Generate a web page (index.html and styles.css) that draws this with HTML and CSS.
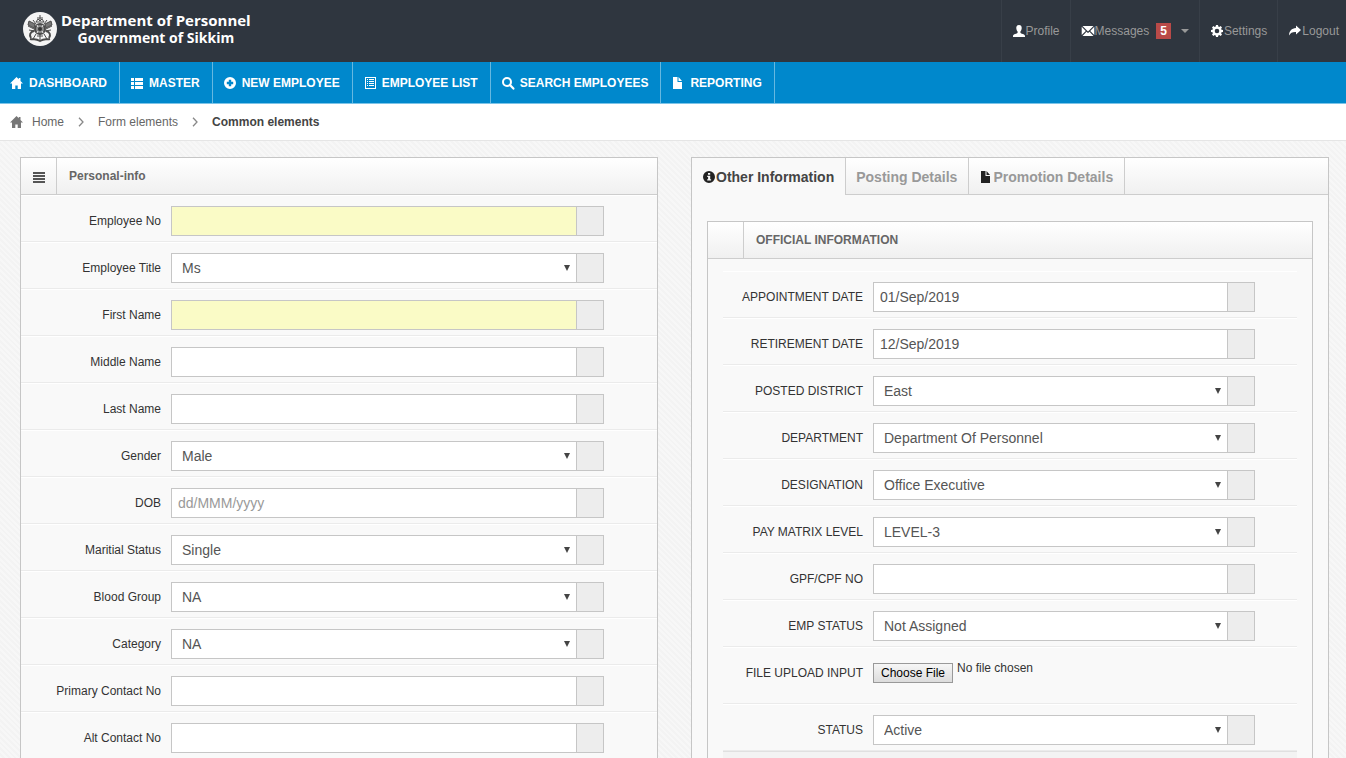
FILE: index.html
```html
<!DOCTYPE html>
<html lang="en">
  <head>
    <meta charset="UTF-8" />
    <meta name="viewport" content="width=device-width, initial-scale=1.0" />
    <title>Department of Personnel - Government of Sikkim</title>
    <link rel="stylesheet" href="styles.css">
  </head>
  <body>
    <!-- Shared icon shapes -->
    <svg class="sprite" aria-hidden="true">
      <symbol id="i-home" viewBox="0 0 14 14"><path d="M6.500 1 0 7.600h2V13h3.300V9.400h2.400V13H11V7.600h2L10.500 5V2H8.800v1.300z" /></symbol>
      <symbol id="i-th-list" viewBox="0 0 14 14"><path d="M1 2h3v3H1zM5 2h8v3H5zM1 6h3v3H1zM5 6h8v3H5zM1 10h3v3H1zM5 10h8v3H5z" /></symbol>
      <symbol id="i-plus" viewBox="0 0 14 14"><path fill-rule="evenodd" d="M7 1a6 6 0 1 0 0 12A6 6 0 0 0 7 1zM5.8 3.8h2.4v2h2v2.4h-2v2H5.8v-2h-2V5.8h2z" /></symbol>
      <symbol id="i-list" viewBox="0 0 14 14"><path fill-rule="evenodd" d="M2 1h11v12H2zM3 2v10h9V2zM4 3h1v1H4zM6 3h5v1H6zM4 5h1v1H4zM6 5h5v1H6zM4 7h1v1H4zM6 7h5v1H6zM4 9h1v1H4zM6 9h5v1H6z" /></symbol>
      <symbol id="i-search" viewBox="0 0 14 14"><path d="M9 9l3.400 3.600" stroke="currentColor" stroke-width="2.200" stroke-linecap="round" /><circle cx="6" cy="6" r="4" fill="none" stroke="currentColor" stroke-width="2" /></symbol>
      <symbol id="i-file" viewBox="0 0 14 14"><path d="M2 1h4.500v5H11v7H2zM7.500 1 11 5H7.500z" /></symbol>
      <symbol id="i-user" viewBox="0 0 14 14"><path d="M7 1C5 1 4.200 2.400 4.300 4.300c.1 1.700.7 2.500 1.300 3.200v1.300C5.300 9.900 1 10 1 12v1h12v-1c0-2-4.300-2.100-4.600-3.200V7.500c.6-.7 1.200-1.500 1.300-3.200C9.800 2.400 9 1 7 1z" /></symbol>
      <symbol id="i-mail" viewBox="0 0 14 14"><path d="M1.500 2h11L7 7.500zM.7 2.700 4.800 7 .7 11zM13.300 2.700 9.200 7l4.100 4zM1.500 12l4-4.200L7 9l1.500-1.200 4 4.200z" /></symbol>
      <symbol id="i-cog" viewBox="0 0 14 14"><path fill-rule="evenodd" d="M6 1h2l.3 1.500 1 .4 1.300-.9 1.400 1.400-.9 1.300.4 1L13 6v2l-1.500.3-.4 1 .9 1.300-1.400 1.400-1.300-.9-1 .4L8 13H6l-.3-1.500-1-.4-1.300.9L2 10.600l.9-1.300-.4-1L1 8V6l1.500-.3.4-1L2 3.400 3.400 2l1.300.9 1-.4zM7 4.700a2.300 2.300 0 1 0 0 4.600 2.300 2.300 0 0 0 0-4.600z" /></symbol>
      <symbol id="i-share" viewBox="0 0 14 14"><path d="M8 1.500 13 6 8 10.500V8C4.500 7.800 2.500 8.800 1 11.500 1.200 7 3.500 4.300 8 4z" /></symbol>
      <symbol id="i-info" viewBox="0 0 14 14"><path fill-rule="evenodd" d="M7 1a6 6 0 1 0 0 12A6 6 0 0 0 7 1zM6 3h2.200v1.700H6zM5.200 5.700h3v3.600h.9v1.300H5.200V9.300h.9V7h-.9z" /></symbol>
      <symbol id="i-align" viewBox="0 0 14 14"><path d="M1 2h12v2H1zM1 5h12v2H1zM1 8h12v2H1zM1 11h12v2H1z" /></symbol>
      <symbol id="i-chevron" viewBox="0 0 6 10"><path d="M1 .8 5 5 1 9.200" fill="none" stroke="currentColor" stroke-width="1.300" /></symbol>
    </svg>

    <header class="topbar">
      <a class="brand" href="#">
        <svg class="emblem" viewBox="0 0 34 34" aria-hidden="true">
          <circle cx="17" cy="17" r="17" fill="#f4f4f4" />
          <g fill="none" stroke="#4a4a4a">
            <path d="M6 9l6 3-1 4-6-3zM28 9l-6 3 1 4 6-3z" fill="#777" />
            <path d="M5 14l6 3M29 14l-6 3M6 18l6 1M28 18l-6 1M10 8l3 4M24 8l-3 4" />
            <circle cx="17" cy="17" r="5" fill="#888" stroke-width="2" />
            <path d="M17 3v6M14 6h6M13 10l2-3 2 2 2-2 2 3z" stroke-width="1" />
            <path d="M11 19c-4 1-5 4-3 7M23 19c4 1 5 4 3 7" stroke-width="2" />
            <path d="M13 22l-3 5M21 22l3 5M14 24h6M17 22v6" stroke-width="1" />
            <path d="M7 27c4 1 5-1 10 2 5-3 6-1 10-2" stroke-width="2" />
          </g>
          <circle cx="17" cy="17" r="2" fill="#333" />
          <path d="M14 13l1 2M20 13l-1 2M14 21l1-2M20 21l-1-2" stroke="#eee" />
        </svg>
        <span class="brand-text">
          <span>Department of Personnel</span>
          <span class="brand-sub">Government of Sikkim</span>
        </span>
      </a>
      <nav class="user-menu">
        <a href="#"><svg class="icon"><use href="#i-user" /></svg>Profile</a>
        <a href="#"><svg class="icon"><use href="#i-mail" /></svg>Messages<span class="badge">5</span><span class="caret"></span></a>
        <a href="#"><svg class="icon"><use href="#i-cog" /></svg>Settings</a>
        <a href="#"><svg class="icon"><use href="#i-share" /></svg>Logout</a>
      </nav>
    </header>

    <nav class="main-nav">
      <a href="#"><svg class="icon"><use href="#i-home" /></svg>DASHBOARD</a>
      <a href="#"><svg class="icon"><use href="#i-th-list" /></svg>MASTER</a>
      <a href="#"><svg class="icon"><use href="#i-plus" /></svg>NEW EMPLOYEE</a>
      <a href="#"><svg class="icon"><use href="#i-list" /></svg>EMPLOYEE LIST</a>
      <a href="#"><svg class="icon"><use href="#i-search" /></svg>SEARCH EMPLOYEES</a>
      <a href="#"><svg class="icon"><use href="#i-file" /></svg>REPORTING</a>
    </nav>

    <nav class="breadcrumb">
      <a class="home" href="#"><svg class="icon"><use href="#i-home" /></svg>Home</a>
      <svg class="chevron"><use href="#i-chevron" /></svg>
      <a href="#">Form elements</a>
      <svg class="chevron"><use href="#i-chevron" /></svg>
      <strong>Common elements</strong>
    </nav>

    <main class="content">
      <section class="panel">
        <div class="panel-head">
          <span class="head-icon"><svg class="icon"><use href="#i-align" /></svg></span>
          <h2>Personal-info</h2>
        </div>
        <form class="personal-form">
          <div class="row">
            <label for="empNo">Employee No</label>
            <div class="field"><input class="required" type="text" id="empNo" /><span class="addon"></span></div>
          </div>
          <div class="row">
            <label for="empTitle">Employee Title</label>
            <div class="field"><select id="empTitle"><option>Ms</option></select><span class="addon"></span></div>
          </div>
          <div class="row">
            <label for="firstName">First Name</label>
            <div class="field"><input class="required" type="text" id="firstName" /><span class="addon"></span></div>
          </div>
          <div class="row">
            <label for="middleName">Middle Name</label>
            <div class="field"><input type="text" id="middleName" /><span class="addon"></span></div>
          </div>
          <div class="row">
            <label for="lastName">Last Name</label>
            <div class="field"><input type="text" id="lastName" /><span class="addon"></span></div>
          </div>
          <div class="row">
            <label for="gender">Gender</label>
            <div class="field"><select id="gender"><option>Male</option></select><span class="addon"></span></div>
          </div>
          <div class="row">
            <label for="dob">DOB</label>
            <div class="field"><input type="text" id="dob" placeholder="dd/MMM/yyyy" /><span class="addon"></span></div>
          </div>
          <div class="row">
            <label for="marital">Maritial Status</label>
            <div class="field"><select id="marital"><option>Single</option></select><span class="addon"></span></div>
          </div>
          <div class="row">
            <label for="blood">Blood Group</label>
            <div class="field"><select id="blood"><option>NA</option></select><span class="addon"></span></div>
          </div>
          <div class="row">
            <label for="category">Category</label>
            <div class="field"><select id="category"><option>NA</option></select><span class="addon"></span></div>
          </div>
          <div class="row">
            <label for="contact">Primary Contact No</label>
            <div class="field"><input type="text" id="contact" /><span class="addon"></span></div>
          </div>
          <div class="row">
            <label for="altContact">Alt Contact No</label>
            <div class="field"><input type="text" id="altContact" /><span class="addon"></span></div>
          </div>
        </form>
      </section>

      <section class="panel">
        <div class="panel-head tabs">
          <a class="active" href="#"><svg class="icon"><use href="#i-info" /></svg>Other Information</a>
          <a href="#">Posting Details</a>
          <a href="#"><svg class="icon"><use href="#i-file" /></svg>Promotion Details</a>
        </div>
        <div class="tab-body">
          <div class="panel inner">
            <div class="panel-head">
              <span class="head-icon"></span>
              <h2>OFFICIAL INFORMATION</h2>
            </div>
            <form class="official-form">
              <div class="row">
                <label for="appointment">APPOINTMENT DATE</label>
                <div class="field"><input type="text" id="appointment" value="01/Sep/2019" /><span class="addon"></span></div>
              </div>
              <div class="row">
                <label for="retirement">RETIREMENT DATE</label>
                <div class="field"><input type="text" id="retirement" value="12/Sep/2019" /><span class="addon"></span></div>
              </div>
              <div class="row">
                <label for="district">POSTED DISTRICT</label>
                <div class="field"><select id="district"><option>East</option></select><span class="addon"></span></div>
              </div>
              <div class="row">
                <label for="department">DEPARTMENT</label>
                <div class="field"><select id="department"><option>Department Of Personnel</option></select><span class="addon"></span></div>
              </div>
              <div class="row">
                <label for="designation">DESIGNATION</label>
                <div class="field"><select id="designation"><option>Office Executive</option></select><span class="addon"></span></div>
              </div>
              <div class="row">
                <label for="payLevel">PAY MATRIX LEVEL</label>
                <div class="field"><select id="payLevel"><option>LEVEL-3</option></select><span class="addon"></span></div>
              </div>
              <div class="row">
                <label for="gpf">GPF/CPF NO</label>
                <div class="field"><input type="text" id="gpf" /><span class="addon"></span></div>
              </div>
              <div class="row">
                <label for="empStatus">EMP STATUS</label>
                <div class="field"><select id="empStatus"><option>Not Assigned</option></select><span class="addon"></span></div>
              </div>
              <div class="row file-row">
                <label for="upload">FILE UPLOAD INPUT</label>
                <div class="file-field"><input type="file" id="upload" /><span>No file chosen</span></div>
              </div>
              <div class="row">
                <label for="status">STATUS</label>
                <div class="field"><select id="status"><option>Active</option></select><span class="addon"></span></div>
              </div>
              <div class="form-actions"></div>
            </form>
          </div>
        </div>
      </section>
    </main>
  </body>
</html>
```
FILE: styles.css
```css
* {
  margin: 0;
  padding: 0;
  box-sizing: border-box;
}

body {
  display: flex;
  flex-direction: column;
  min-height: 100vh;
  font-family: "Liberation Sans", Arial, sans-serif;
  font-size: 12px;
  color: #333;
  background: repeating-linear-gradient(45deg, #f7f7f7 0 2px, #f3f3f3 2px 4px);
}

a {
  color: inherit;
  text-decoration: none;
}

.sprite {
  display: none;
}

.icon {
  width: 14px;
  height: 14px;
  flex: none;
  fill: currentColor;
}

/* Top bar */
.topbar {
  display: flex;
  justify-content: space-between;
  height: 62px;
  background-color: #2f363f;
}

.brand {
  display: flex;
  align-items: center;
  gap: 4px;
  padding: 0 0 4px 23px;
  color: #fff;
}

.emblem {
  width: 34px;
  height: 34px;
}

.brand-text {
  display: flex;
  flex-direction: column;
  align-items: center;
  font-family: "Open Sans", "Noto Sans", sans-serif;
  font-size: 15px;
  font-weight: 700;
  line-height: 17px;
}

.brand-sub {
  font-size: 14px;
}

.user-menu {
  display: flex;
}

.user-menu a {
  display: flex;
  align-items: center;
  padding: 0 10px;
  border-left: 1px solid #383f48;
  color: #999;
}

.user-menu a:last-child {
  padding-right: 7px;
}

.user-menu .icon {
  color: #fff;
}

.badge {
  margin-left: 7px;
  padding: 0 4px;
  background-color: #b94a48;
  color: #fff;
  font-weight: bold;
  line-height: 16px;
}

.caret {
  margin-left: 10px;
  border: 4px solid transparent;
  border-top-color: #999;
  border-bottom: 0;
}

/* Main navigation */
.main-nav {
  display: flex;
  height: 42px;
  background-color: #0088cc;
  border-bottom: 1px solid #7cc4e8;
}

.main-nav a {
  display: flex;
  align-items: center;
  gap: 5px;
  padding: 0 12px 0 10px;
  border-right: 1px solid #66b8e0;
  color: #fff;
  font-weight: bold;
}

/* Breadcrumb */
.breadcrumb {
  display: flex;
  align-items: center;
  gap: 14px;
  height: 37px;
  padding: 0 10px;
  background-color: #fff;
  border-bottom: 1px solid #e5e5e5;
  color: #666;
}

.breadcrumb .home {
  display: flex;
  align-items: center;
  gap: 8px;
}

.breadcrumb .icon {
  color: #777;
}

.breadcrumb strong {
  color: #444;
}

.chevron {
  width: 6px;
  height: 10px;
  color: #888;
}

/* Panels */
.content {
  flex: 1;
  display: grid;
  grid-template-columns: 1fr 1fr;
  gap: 33px;
  padding: 16px 17px 0 20px;
}

.panel {
  display: flex;
  flex-direction: column;
  background-color: #f9f9f9;
  border: 1px solid #c6c6c6;
  border-bottom: 0;
}

.panel-head {
  display: flex;
  height: 37px;
  background: linear-gradient(#fff, #f0f0f0);
  border-bottom: 1px solid #cdcdcd;
}

.head-icon {
  display: flex;
  align-items: center;
  justify-content: center;
  width: 36px;
  padding-top: 2px;
  border-right: 1px solid #cdcdcd;
  color: #555;
}

.panel-head h2 {
  padding-left: 12px;
  font-size: 12px;
  line-height: 36px;
  color: #666;
}

/* Tabs */
.tabs a {
  display: flex;
  align-items: center;
  height: 36px;
  padding: 2px 11px 0 10px;
  border-right: 1px solid #cdcdcd;
  color: #999;
  font-size: 14px;
  font-weight: bold;
}

.tabs a.active {
  height: 37px;
  padding-bottom: 1px;
  background-color: #f9f9f9;
  color: #444;
}

.tabs .icon {
  color: #222;
}

.tab-body {
  flex: 1;
  display: flex;
  padding: 26px 15px 0;
}

.inner {
  flex: 1;
}

/* Form rows */
.row {
  display: grid;
  grid-template-columns: 140px 1fr;
  gap: 10px;
  padding: 10px 53px 5px 0;
  border-top: 1px solid #fff;
  border-bottom: 1px solid #ebebeb;
}

.row label {
  line-height: 30px;
  text-align: right;
}

.personal-form .row:last-child {
  border-bottom: 0;
}

.official-form {
  flex: 1;
  display: flex;
  flex-direction: column;
  padding: 12px 15px 0;
}

.official-form .row {
  padding-right: 42px;
}

.field {
  display: flex;
  height: 30px;
}

.field input,
.field select {
  flex: 1;
  min-width: 0;
  border: 1px solid #c6c6c6;
  border-radius: 0;
  background-color: #fff;
  color: #555;
  font-family: inherit;
  font-size: 14px;
}

.field input {
  padding: 0 6px;
}

.field input.required {
  background-color: #fafbc6;
}

.field input::placeholder {
  color: #999;
}

.field select {
  appearance: none;
  padding: 0 20px 0 10px;
  background-image: url("data:image/svg+xml,%3Csvg xmlns='http://www.w3.org/2000/svg' viewBox='0 0 6 6'%3E%3Cpath d='M0 0h6L3 6z' fill='%23444'/%3E%3C/svg%3E");
  background-repeat: no-repeat;
  background-position: right 6px center;
  background-size: 6px 6px;
}

.addon {
  width: 27px;
  background-color: #ededed;
  border: 1px solid #c6c6c6;
  border-left: 0;
}

/* File upload */
.official-form .file-row {
  padding-bottom: 15px;
}

.file-field {
  display: flex;
  gap: 4px;
  line-height: 20px;
}

.file-field input {
  width: 80px;
  height: 20px;
  margin-top: 5px;
  font-size: 12px;
  font-family: inherit;
}

.file-field input::file-selector-button {
  width: 80px;
  height: 20px;
  border: 1px solid #999;
  background: linear-gradient(#f6f6f6, #dcdcdc);
  color: #000;
  font-family: inherit;
  font-size: 12px;
}

.form-actions {
  flex: 1;
  min-height: 7px;
  background-color: #f3f3f3;
  border-top: 1px solid #e0e0e0;
}
```
